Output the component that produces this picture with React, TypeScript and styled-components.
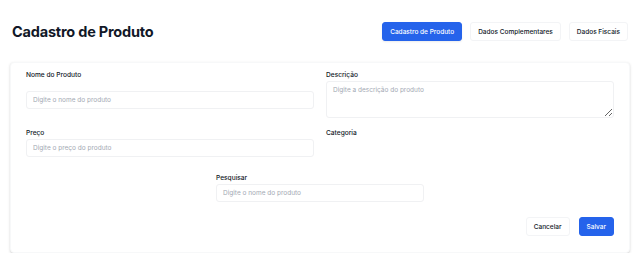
import React from 'react';
import styled, { createGlobalStyle } from 'styled-components';

const GlobalStyle = createGlobalStyle`
  body {
    margin: 0;
    background: #ffffff;
    font-family: Inter, "Liberation Sans", sans-serif;
    color: #111827;
  }
  * { box-sizing: border-box; }
`;

const Page = styled.div`
  padding: 21px 10px 0 10px;
`;

const Header = styled.div`
  display: flex;
  align-items: center;
  justify-content: space-between;
  height: 21px;
  padding: 0 2px;
`;

const Title = styled.h1`
  margin: 0;
  font-size: 14.5px;
  font-weight: 700;
  letter-spacing: -0.2px;
`;

const Tabs = styled.div`
  display: flex;
  gap: 8px;
`;

const TabButton = styled.button<{ $active?: boolean }>`
  height: 19px;
  padding: 0 7px;
  border-radius: 3px;
  font-family: inherit;
  font-size: 6.5px;
  font-weight: 500;
  border: 1px solid ${(p) => (p.$active ? '#2563eb' : '#f3f4f6')};
  background: ${(p) => (p.$active ? '#2563eb' : '#ffffff')};
  color: ${(p) => (p.$active ? '#ffffff' : '#111827')};
  box-shadow: ${(p) => (p.$active ? '0 1px 2px rgba(0,0,0,0.08)' : 'none')};
`;

const Card = styled.div`
  margin-top: 20px;
  background: #ffffff;
  border: 1px solid #f7f8f9;
  border-radius: 4px;
  box-shadow: 0 1px 3px rgba(0, 0, 0, 0.12), 0 1px 2px rgba(0, 0, 0, 0.06);
  padding: 8px 15px 16px;
`;

const Grid = styled.div`
  display: grid;
  grid-template-columns: 1fr 1fr;
  column-gap: 12px;
  row-gap: 11px;
`;

const Field = styled.div`
  display: flex;
  flex-direction: column;
`;

const Label = styled.label`
  font-size: 6.6px;
  font-weight: 500;
  line-height: 9px;
  color: #111827;
`;

const Input = styled.input<{ $offset?: number }>`
  height: 18px;
  margin-top: ${(p) => p.$offset ?? 1}px;
  padding: 0 6px;
  border: 1px solid #f0f1f3;
  border-radius: 3px;
  font-family: inherit;
  font-size: 6.5px;
  color: #111827;
  outline: none;
  &::placeholder { color: #a3a9b3; }
`;

const TextArea = styled.textarea`
  height: 37px;
  margin-top: 1px;
  padding: 4px 6px;
  border: 1px solid #f0f1f3;
  border-radius: 3px;
  font-family: inherit;
  font-size: 6.5px;
  outline: none;
  &::placeholder { color: #a3a9b3; }
`;

const SearchRow = styled.div`
  display: flex;
  justify-content: center;
  margin-top: 17px;
`;

const SearchField = styled(Field)`
  width: 208px;
`;

const Actions = styled.div`
  display: flex;
  justify-content: flex-end;
  gap: 9px;
  margin-top: 15px;
`;

const ActionButton = styled.button<{ $primary?: boolean }>`
  height: 19px;
  padding: 0 7px;
  border-radius: 3px;
  font-family: inherit;
  font-size: 6.5px;
  font-weight: 500;
  border: 1px solid ${(p) => (p.$primary ? '#2563eb' : '#f3f4f6')};
  background: ${(p) => (p.$primary ? '#2563eb' : '#ffffff')};
  color: ${(p) => (p.$primary ? '#ffffff' : '#111827')};
`;

const App: React.FC = () => {
  return (
    <Page>
      <GlobalStyle />
      <Header>
        <Title>Cadastro de Produto</Title>
        <Tabs>
          <TabButton $active>Cadastro de Produto</TabButton>
          <TabButton>Dados Complementares</TabButton>
          <TabButton>Dados Fiscais</TabButton>
        </Tabs>
      </Header>
      <Card>
        <Grid>
          <Field>
            <Label>Nome do Produto</Label>
            <Input $offset={11} placeholder="Digite o nome do produto" />
          </Field>
          <Field>
            <Label>Descrição</Label>
            <TextArea placeholder="Digite a descrição do produto" />
          </Field>
          <Field>
            <Label>Preço</Label>
            <Input placeholder="Digite o preço do produto" />
          </Field>
          <Field>
            <Label>Categoria</Label>
          </Field>
        </Grid>
        <SearchRow>
          <SearchField>
            <Label>Pesquisar</Label>
            <Input placeholder="Digite o nome do produto" />
          </SearchField>
        </SearchRow>
        <Actions>
          <ActionButton>Cancelar</ActionButton>
          <ActionButton $primary>Salvar</ActionButton>
        </Actions>
      </Card>
    </Page>
  );
};

export default App;
